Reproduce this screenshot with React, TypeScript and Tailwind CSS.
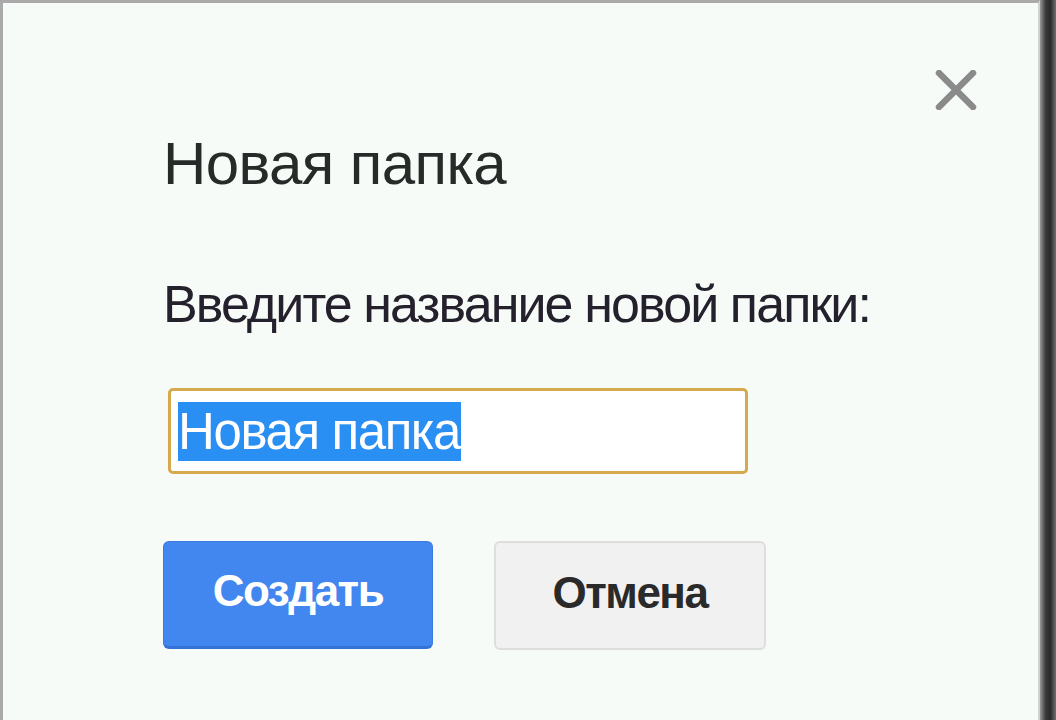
import React from "react";

export default function App() {
  return (
    <div className="w-[1056px] h-[720px] flex bg-[#9a9a9a] overflow-hidden" style={{ fontFamily: '"Liberation Sans", Arial, sans-serif' }}>
      <div className="w-[1040px] h-[720px] bg-[#f7fbf7] border-l-[3px] border-t-[3px] border-r-[2px] border-l-[#a9aaa9] border-t-[#a9aaa9] border-r-[#d0d2d0] relative flex flex-col">
        <button className="absolute left-[929px] top-[65px] w-[48px] h-[44px] flex items-center justify-center">
          <svg width="44" height="40" viewBox="0 0 44 40">
            <path d="M5 3 L39 37 M39 3 L5 37" stroke="#8a8a8a" strokeWidth="6.5" strokeLinecap="round" />
          </svg>
        </button>
        <div className="pl-[160px] pt-[131px] flex flex-col">
          <div className="text-[60px] leading-[60px] text-[#262a28] tracking-[-0.6px]">Новая папка</div>
          <div className="mt-[84px] text-[52px] leading-[52px] text-[#24202c] tracking-[-1.9px]">Введите название новой папки:</div>
          <div className="mt-[58px] ml-[5px] w-[580px] h-[86px] border-[3px] border-[#d6a94f] rounded-[5px] bg-white flex items-center pl-[7px]">
            <span className="bg-[#2a8ff2] text-white text-[51px] leading-[59px] h-[59px] tracking-[-1.4px] pr-[1px]">Новая папка</span>
          </div>
          <div className="mt-[67px] flex gap-[61px]">
            <button className="w-[270px] h-[108px] rounded-[6px] bg-[#4286ef] border border-[#3b7be0] border-b-[3px] border-b-[#3572d6] text-white font-bold text-[44px] tracking-[-1.5px] flex items-center justify-center pb-[6px]">Создать</button>
            <button className="w-[272px] h-[109px] rounded-[6px] bg-[#f1f1f1] border-[2px] border-[#dedede] text-[#2a2a2a] font-bold text-[44px] tracking-[-1.5px] flex items-center justify-center pb-[6px]">Отмена</button>
          </div>
        </div>
      </div>
      <div className="w-[16px] h-[720px] bg-[linear-gradient(to_right,#9a9a9a,#3a3a3a_35%,#2a2a2a_65%,#707070)]" />
    </div>
  );
}
